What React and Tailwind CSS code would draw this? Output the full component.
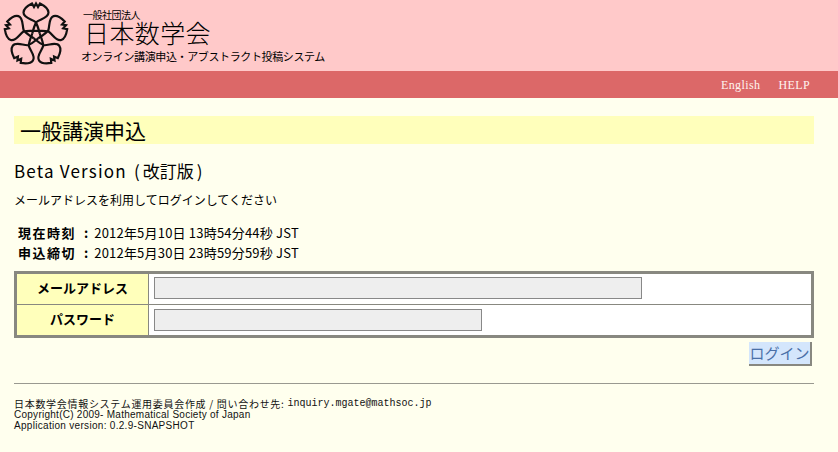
import React from 'react';

const JP = "font-['Noto_Sans_CJK_JP','Liberation_Sans',sans-serif]";

function Logo() {
  // one petal with a notched tip; each side ends halfway along a star edge and meets the side of another petal there
  const petal = 'M3.8 -1.2 C2.8 -5 1.6 -10 -0.5 -13 C-4 -16 -12.5 -17 -12.5 -22.5 C-12.5 -26.5 -8 -29.5 -4 -31.5 L-2 -28 L0 -31.5 L2 -28 L4 -31.5 C8 -29.5 12.5 -26.5 12.5 -22.5 C12.5 -17 4 -16 0.5 -13 C-1.6 -10 -2.8 -5 -3.8 -1.2';
  return (
    <svg width="72" height="71" viewBox="0 0 72 71" className="shrink-0">
      <g transform="translate(36 35)" fill="none" stroke="#111" strokeWidth="2.2" strokeLinejoin="miter">
        {[0, 72, 144, 216, 288].map((a) => (
          <path key={a} d={petal} transform={`rotate(${a})`} />
        ))}
      </g>
    </svg>
  );
}

export default function App() {
  return (
    <div className={`${JP} w-[838px] h-[452px] overflow-hidden bg-[#ffffee] text-black`}>
      {/* Header */}
      <div className="h-[71px] bg-[#ffc9c9] flex items-start">
        <Logo />
        <div className="ml-[9px] pt-[9px] flex flex-col">
          <div className="h-[12px] text-[10px] leading-[12px] tracking-[-0.5px] ml-[2px]">一般社団法人</div>
          <div className="h-[25px] text-[25px] leading-[23px] ml-[3px] tracking-[0.4px] font-light">日本数学会</div>
          <div className="h-[16px] text-[11px] leading-[16px] tracking-[-0.38px] mt-[2px]">オンライン講演申込・アブストラクト投稿システム</div>
        </div>
      </div>
      <div className="h-[27px] bg-[#dc6868] flex items-center justify-end gap-[18px] pr-[28px] text-[12px] tracking-[0.4px] text-[#fff4f0] font-['Liberation_Serif',serif]">
        <span>English</span>
        <span>HELP</span>
      </div>

      {/* Main */}
      <div className="px-[14px] pt-[18px] w-[828px]">
        <div className="h-[28px] bg-[#ffffbb] pl-[6px] text-[21px] leading-[28px]">一般講演申込</div>
        <div className="mt-[15px] h-[24px] text-[17px] leading-[24px] tracking-[1.2px] flex whitespace-pre">
          <span>Beta Version</span>
          <span className="ml-[7px] tracking-normal">(</span>
          <span className="mx-[3px] tracking-normal">改訂版</span>
          <span className="tracking-normal">)</span>
        </div>
        <div className="mt-[8px] h-[18px] text-[12px] leading-[18px]">メールアドレスを利用してログインしてください</div>
        <div className="mt-[14px] ml-[4px] text-[13px] leading-[20px]">
          <div className="h-[20px] flex">
            <b className="font-bold tracking-[1.5px]">現在時刻</b><b className="font-bold ml-[8px] mr-[6px]">:</b>
            <span className="tracking-[0.2px]">2012年5月10日 13時54分44秒 JST</span>
          </div>
          <div className="h-[20px] flex">
            <b className="font-bold tracking-[1.5px]">申込締切</b><b className="font-bold ml-[8px] mr-[6px]">:</b>
            <span className="tracking-[0.2px]">2012年5月30日 23時59分59秒 JST</span>
          </div>
        </div>

        <div className="mt-[8px] w-[800px] border-[3px] border-[#888880] bg-white">
          <div className="flex h-[31px] border-b border-[#888880]">
            <div className="w-[132px] bg-[#ffffbb] border-r border-[#888880] flex items-center justify-center pb-[2px] text-[13px] font-bold">メールアドレス</div>
            <div className="pl-[5px] pt-[3px]">
              <div className="w-[488px] h-[22px] bg-[#eeeeee] border border-[#888888]" />
            </div>
          </div>
          <div className="flex h-[30px]">
            <div className="w-[132px] bg-[#ffffbb] border-r border-[#888880] flex items-center justify-center pb-[2px] text-[13px] font-bold">パスワード</div>
            <div className="pl-[5px] pt-[4px]">
              <div className="w-[328px] h-[22px] bg-[#eeeeee] border border-[#888888]" />
            </div>
          </div>
        </div>

        <div className="flex justify-end w-[798px] mt-[4px]">
          <button className="w-[63px] h-[24px] bg-[#d4e6fc] border-r-2 border-b-2 border-[#888880] text-[15px] leading-[22px] text-[#4a70a8]">ログイン</button>
        </div>

        <div className="mt-[17px] w-[800px] border-t border-[#999990]" />

        {/* Footer */}
        <div className="mt-[14px] text-[10px] leading-[11px] text-[#111]">
          <div className="h-[11px] flex items-center whitespace-pre">
            <span className="tracking-[0.7px]">日本数学会情報システム運用委員会作成 / 問い合わせ先: </span>
            <span className="font-['Liberation_Mono',monospace]">inquiry.mgate@mathsoc.jp</span>
          </div>
          <div className="h-[11px] flex items-center tracking-[0.26px] font-['Liberation_Sans',sans-serif]">Copyright(C) 2009- Mathematical Society of Japan</div>
          <div className="h-[11px] flex items-center tracking-[0.3px] font-['Liberation_Sans',sans-serif]">Application version: 0.2.9-SNAPSHOT</div>
        </div>
      </div>
    </div>
  );
}
